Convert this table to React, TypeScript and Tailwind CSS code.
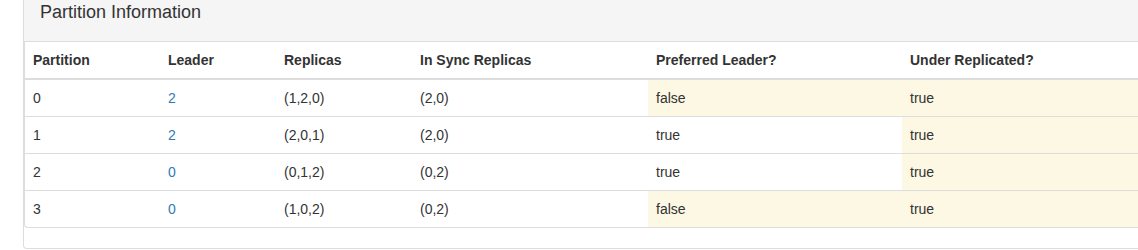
import React from 'react';

interface PartitionRow {
  partition: number;
  leader: number;
  replicas: string;
  inSync: string;
  preferred: boolean;
  underReplicated: boolean;
}

const rows: PartitionRow[] = [
  { partition: 0, leader: 2, replicas: '(1,2,0)', inSync: '(2,0)', preferred: false, underReplicated: true },
  { partition: 1, leader: 2, replicas: '(2,0,1)', inSync: '(2,0)', preferred: true, underReplicated: true },
  { partition: 2, leader: 0, replicas: '(0,1,2)', inSync: '(0,2)', preferred: true, underReplicated: true },
  { partition: 3, leader: 0, replicas: '(1,0,2)', inSync: '(0,2)', preferred: false, underReplicated: true },
];

const th = 'text-left font-bold px-2 py-2 leading-5 border-b-2 border-[#ddd]';
const td = 'px-2 py-2 leading-5 border-t border-[#ddd]';

const App: React.FC = () => (
  <div className="w-[1138px] h-[250px] overflow-hidden bg-white text-[14px] text-[#333] font-['Liberation_Sans',Arial,sans-serif]">
    <div className="ml-[23px] w-[1180px] border border-t-0 border-[#ddd] rounded-b">
      <div className="bg-[#f5f5f5] border-b border-[#ddd] pl-[16px] pt-[2px] h-[42px]">
        <h3 className="text-[18px] leading-5">Partition Information</h3>
      </div>

      <div className="border-l border-b border-[#ddd] rounded-bl">
        <table className="w-full table-fixed border-collapse">
          <thead>
            <tr>
              <th className={`${th} w-[135px]`}>Partition</th>
              <th className={`${th} w-[116px]`}>Leader</th>
              <th className={`${th} w-[136px]`}>Replicas</th>
              <th className={`${th} w-[236px]`}>In Sync Replicas</th>
              <th className={`${th} w-[254px]`}>Preferred Leader?</th>
              <th className={th}>Under Replicated?</th>
            </tr>
          </thead>
          <tbody>
            {rows.map((r, i) => (
              <tr key={r.partition}>
                <td className={`${td} ${i === 0 ? 'border-t-0' : ''}`}>{r.partition}</td>
                <td className={`${td} ${i === 0 ? 'border-t-0' : ''}`}>
                  <a className="text-[#337ab7]">{r.leader}</a>
                </td>
                <td className={`${td} ${i === 0 ? 'border-t-0' : ''}`}>{r.replicas}</td>
                <td className={`${td} ${i === 0 ? 'border-t-0' : ''}`}>{r.inSync}</td>
                <td className={`${td} ${i === 0 ? 'border-t-0' : ''} ${r.preferred ? '' : 'bg-[#fcf8e3]'}`}>
                  {String(r.preferred)}
                </td>
                <td className={`${td} ${i === 0 ? 'border-t-0' : ''} ${r.underReplicated ? 'bg-[#fcf8e3]' : ''}`}>
                  {String(r.underReplicated)}
                </td>
              </tr>
            ))}
          </tbody>
        </table>
      </div>

      <div className="h-[20px]" />
    </div>
  </div>
);

export default App;
